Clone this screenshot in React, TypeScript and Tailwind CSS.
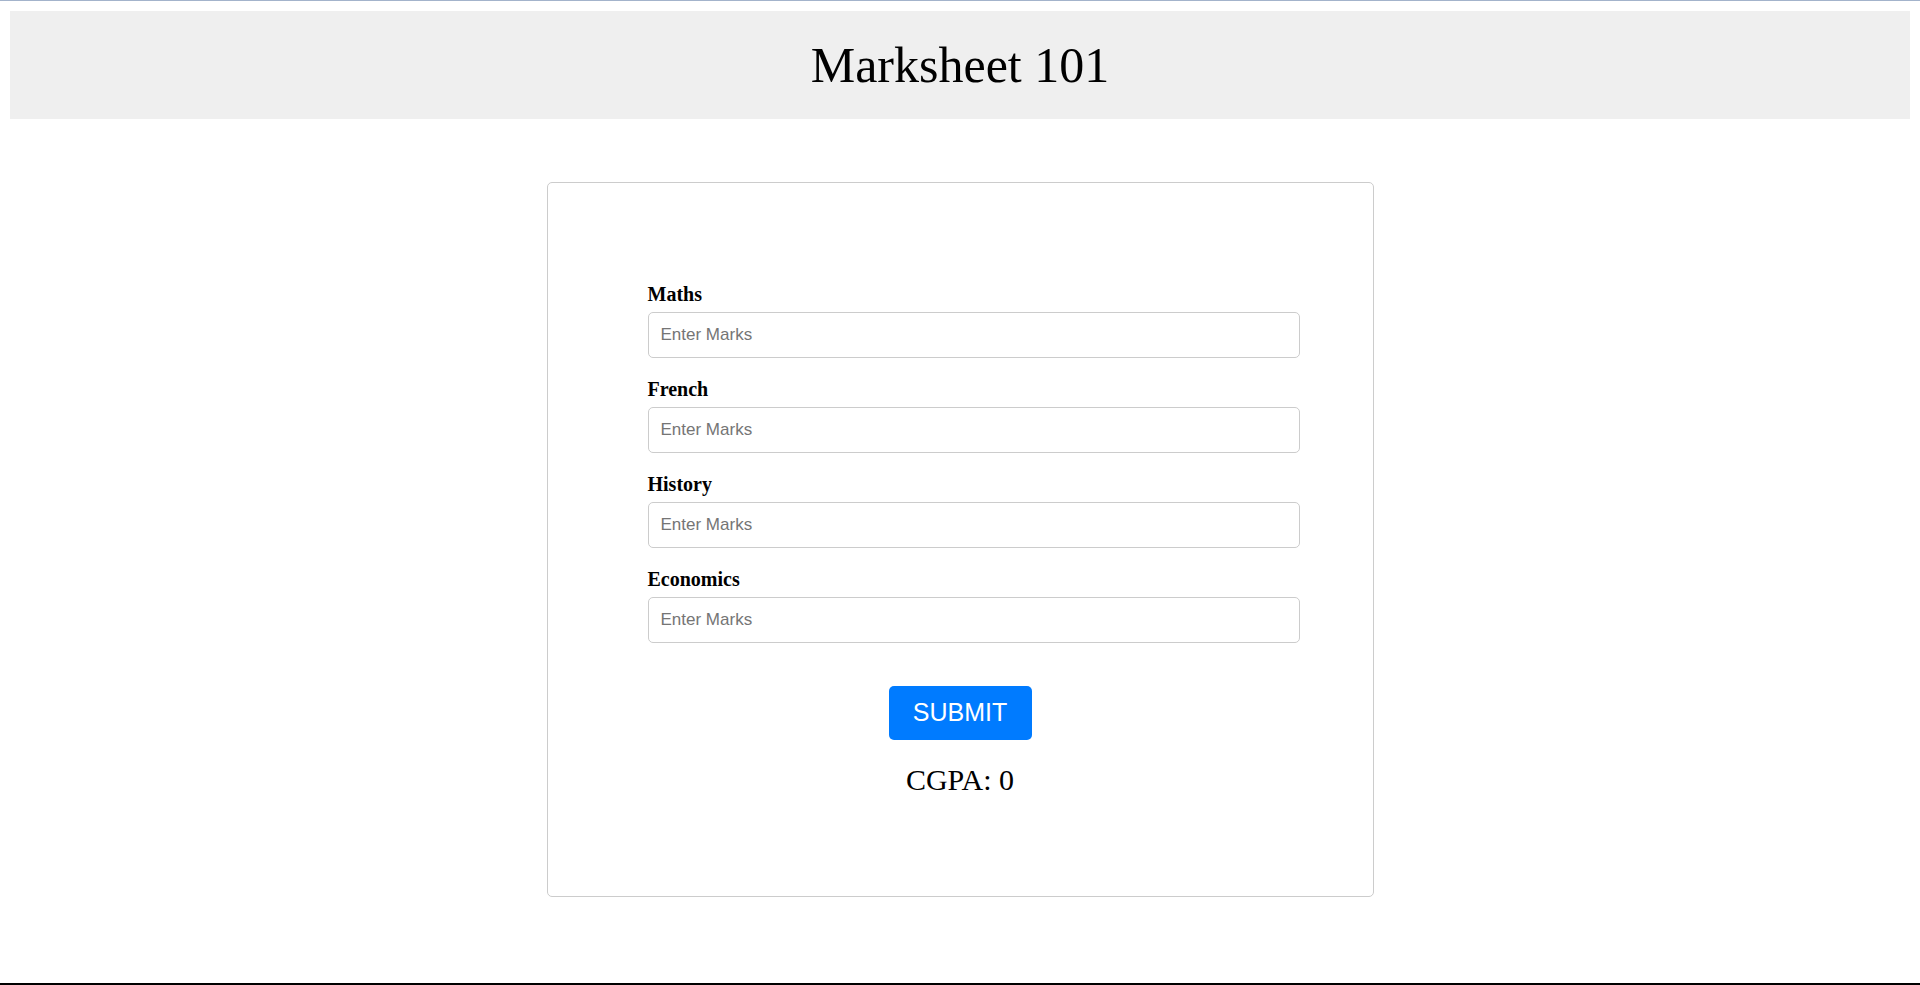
import React from "react";

const subjects = ["Maths", "French", "History", "Economics"];

export default function App() {
  return (
    <div className="min-h-[985px] flex flex-col bg-white">
      <div className="h-px w-full bg-[#a3b3cb]" />
      <div className="px-[10px] pt-[10px]">
        <header className="h-[108px] bg-[#efefef] flex items-center justify-center">
          <h1
            className="text-[50px] leading-[58px] text-black font-normal"
            style={{ fontFamily: '"Liberation Serif", "Times New Roman", serif' }}
          >
            Marksheet 101
          </h1>
        </header>
      </div>
      <div className="flex justify-center pt-[63px]">
        <div className="w-[827px] h-[715px] border border-[#cccccc] rounded-[5px] pt-[100px] px-[100px]">
          <div className="flex flex-col">
            {subjects.map((s, i) => (
              <div key={s} className={i === 0 ? "flex flex-col" : "flex flex-col mt-[20px]"}>
                <label
                  className="text-[20px] leading-[22px] font-bold text-black"
                  style={{ fontFamily: '"Liberation Serif", "Times New Roman", serif' }}
                >
                  {s}
                </label>
                <input
                  type="text"
                  placeholder="Enter Marks"
                  className="mt-[7px] w-[652px] h-[46px] border border-[#cccccc] rounded-[5px] px-[12px] text-[17px] text-black placeholder:text-[#757575] outline-none"
                  style={{ fontFamily: '"Liberation Sans", Arial, sans-serif' }}
                />
              </div>
            ))}
          </div>
          <div className="flex flex-col items-center mt-[43px]">
            <button
              className="w-[143px] h-[54px] bg-[#007bff] text-white text-[25px] rounded-[5px]"
              style={{ fontFamily: '"Liberation Sans", Arial, sans-serif' }}
            >
              SUBMIT
            </button>
            <div
              className="mt-[22px] text-[30px] leading-[35px] text-black"
              style={{ fontFamily: '"Liberation Serif", "Times New Roman", serif' }}
            >
              CGPA: 0
            </div>
          </div>
        </div>
      </div>
      <div className="mt-auto h-[2px] w-full bg-black" />
    </div>
  );
}
